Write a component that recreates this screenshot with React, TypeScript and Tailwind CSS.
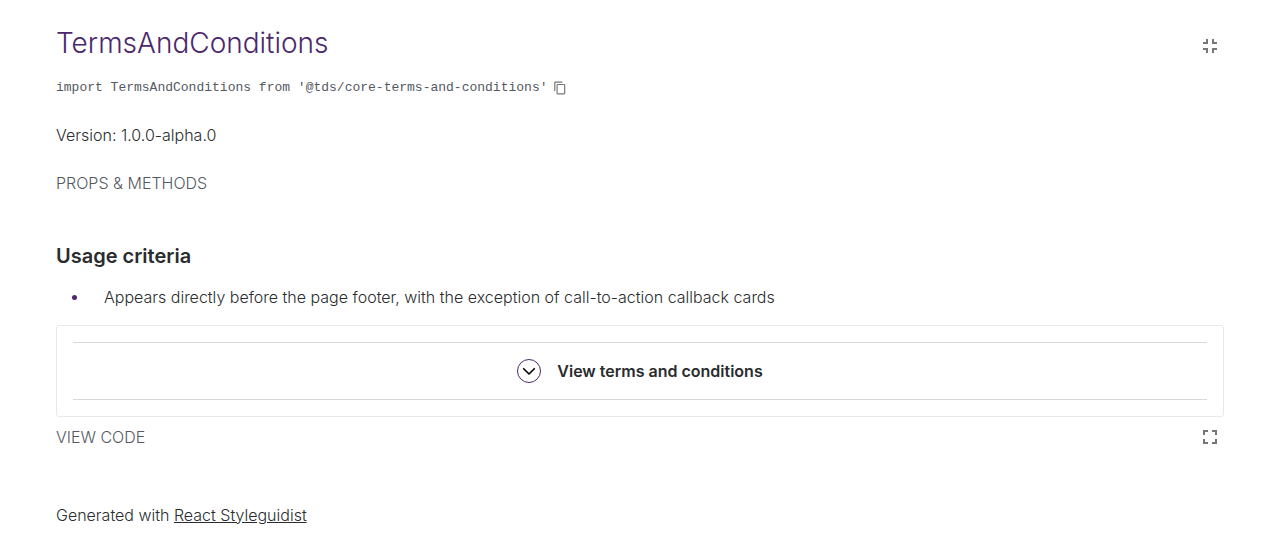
import { useState } from 'react';

function CopyIcon() {
  return (
    <svg width="14" height="14" viewBox="0 0 24 24" fill="currentColor" aria-hidden="true">
      <path d="M16 1H4c-1.1 0-2 .9-2 2v14h2V3h12V1zm3 4H8c-1.1 0-2 .9-2 2v14c0 1.1.9 2 2 2h11c1.1 0 2-.9 2-2V7c0-1.1-.9-2-2-2zm0 16H8V7h11v14z" />
    </svg>
  );
}

function FullscreenIcon({ exit = false }: { exit?: boolean }) {
  return (
    <svg width="24" height="24" viewBox="0 0 24 24" fill="currentColor" aria-hidden="true">
      <path
        d={
          exit
            ? 'M5 16h3v3h2v-5H5v2zm3-8H5v2h5V5H8v3zm6 11h2v-3h3v-2h-5v5zm2-11V5h-2v5h5V8h-3z'
            : 'M7 14H5v5h5v-2H7v-3zm-2-4h2V7h3V5H5v5zm12 7h-3v2h5v-5h-2v3zM14 5v2h3v3h2V5h-5z'
        }
      />
    </svg>
  );
}

export default function App() {
  const [open, setOpen] = useState(false);

  return (
    <main className="bg-white px-14 pt-6 pb-4 font-['Inter',sans-serif] text-base font-light text-[#2a2c2e]">
      <header className="flex items-start justify-between">
        <h1 className="text-[28px] leading-[38px] font-light text-[#4b286d]">TermsAndConditions</h1>
        <a href="#components" aria-label="Show all components" className="mr-0.5 pt-2.5 text-[#767676]">
          <FullscreenIcon exit />
        </a>
      </header>

      <div className="mt-3.5 flex items-center gap-1.5 font-['Liberation_Mono',monospace] text-[13px] leading-6 font-normal text-[#54595f]">
        <span>import TermsAndConditions from '@tds/core-terms-and-conditions'</span>
        <button type="button" aria-label="Copy to clipboard" className="text-[#767676]">
          <CopyIcon />
        </button>
      </div>

      <p className="mt-[23px] leading-6">Version: 1.0.0-alpha.0</p>

      <button type="button" className="mt-6 block leading-6 text-[#54595f]">
        PROPS &amp; METHODS
      </button>

      <h2 className="mt-[45px] text-xl leading-8 font-semibold">Usage criteria</h2>
      <ul className="mt-[11px]">
        <li className="flex items-center pl-4 leading-7">
          <span className="mr-[27px] size-[5px] rounded-full bg-[#4b286d]" aria-hidden="true" />
          Appears directly before the page footer, with the exception of call-to-action callback cards
        </li>
      </ul>

      <section className="mt-3.5 rounded-[3px] border border-[#e8e8e8] p-4">
        <div className="border-y border-[#d8d8d8]">
          <button
            type="button"
            aria-expanded={open}
            onClick={() => setOpen(!open)}
            className="flex w-full items-center justify-center gap-4 py-4 leading-6 font-semibold"
          >
            <span className="flex size-6 items-center justify-center rounded-full border border-[#4b286d]">
              <svg
                width="14"
                height="14"
                viewBox="0 0 14 14"
                fill="none"
                stroke="#000"
                strokeWidth="1.6"
                strokeLinecap="round"
                strokeLinejoin="round"
                aria-hidden="true"
              >
                <path d="M1.7 4.7L7 10l5.3-5.3" />
              </svg>
            </span>
            View terms and conditions
          </button>
        </div>
      </section>

      <div className="mt-2 flex items-center justify-between">
        <button type="button" className="leading-6 text-[#54595f]">
          VIEW CODE
        </button>
        <a href="#isolated" aria-label="Open isolated" className="mr-0.5 text-[#767676]">
          <FullscreenIcon />
        </a>
      </div>

      <footer className="mt-[54px] leading-6">
        Generated with{' '}
        <a href="https://react-styleguidist.js.org/" className="underline">
          React Styleguidist
        </a>
      </footer>
    </main>
  );
}
